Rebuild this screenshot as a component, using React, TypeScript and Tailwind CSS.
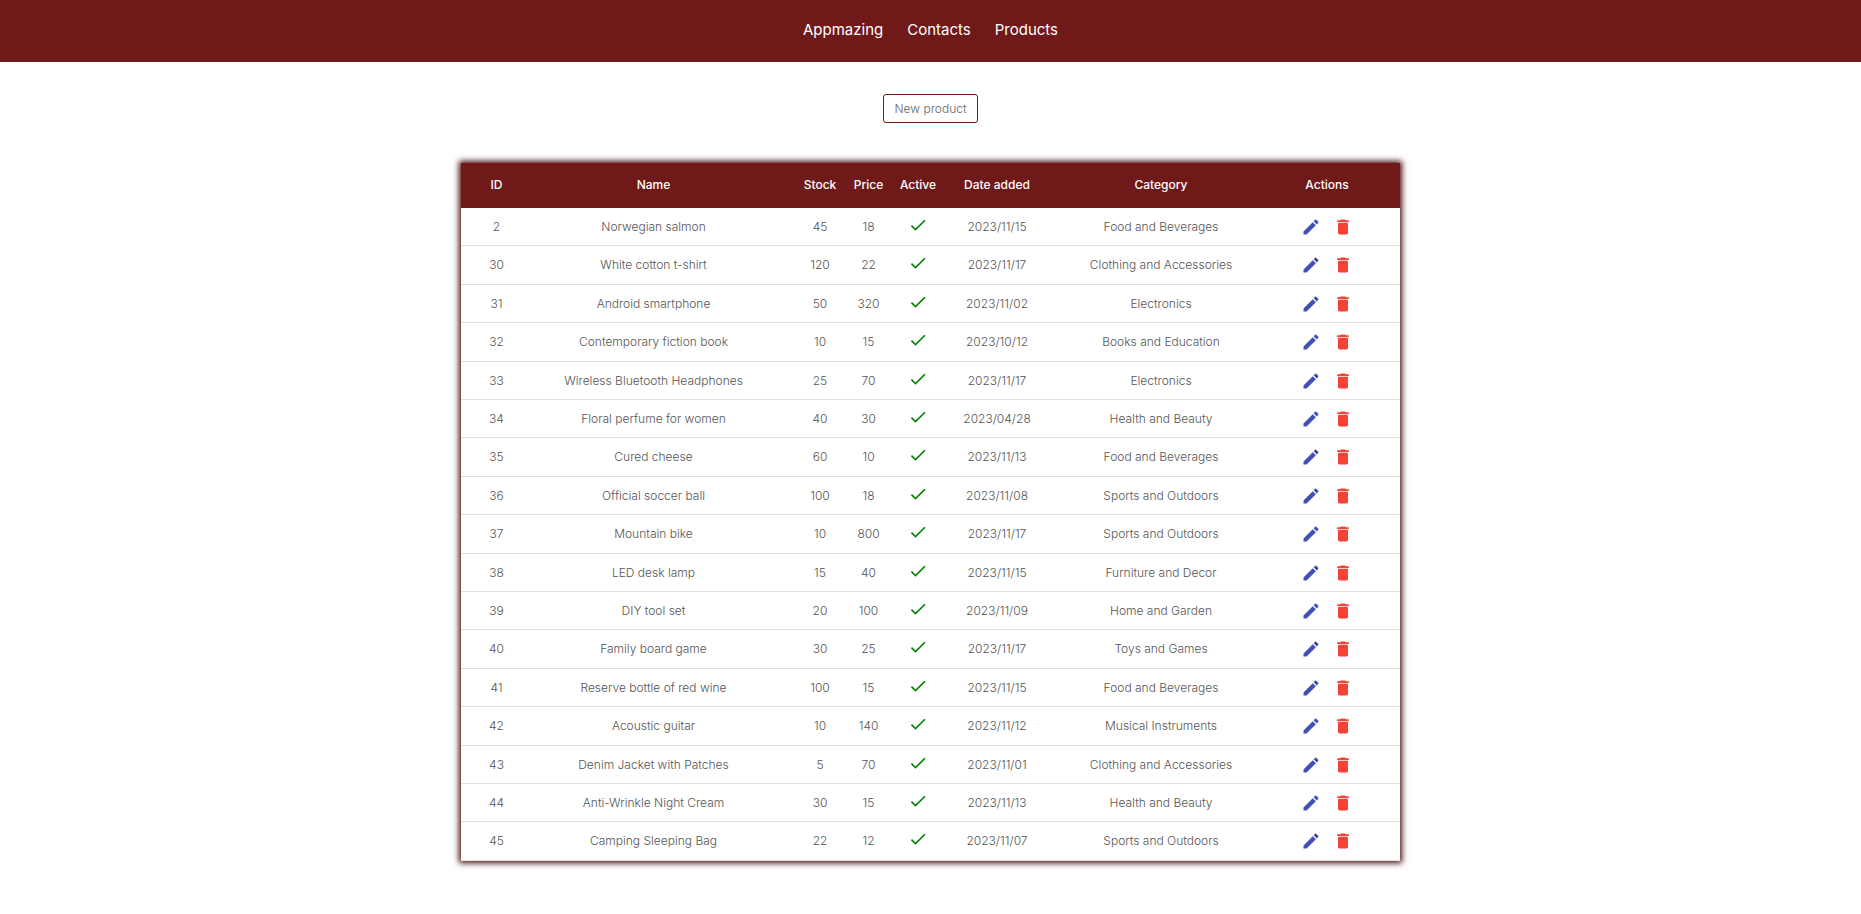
import { MdCheck, MdDelete, MdEdit } from "react-icons/md";

type Product = {
  id: number;
  name: string;
  stock: number;
  price: number;
  date: string;
  category: string;
};

const products: Product[] = [
  { id: 2, name: "Norwegian salmon", stock: 45, price: 18, date: "2023/11/15", category: "Food and Beverages" },
  { id: 30, name: "White cotton t-shirt", stock: 120, price: 22, date: "2023/11/17", category: "Clothing and Accessories" },
  { id: 31, name: "Android smartphone", stock: 50, price: 320, date: "2023/11/02", category: "Electronics" },
  { id: 32, name: "Contemporary fiction book", stock: 10, price: 15, date: "2023/10/12", category: "Books and Education" },
  { id: 33, name: "Wireless Bluetooth Headphones", stock: 25, price: 70, date: "2023/11/17", category: "Electronics" },
  { id: 34, name: "Floral perfume for women", stock: 40, price: 30, date: "2023/04/28", category: "Health and Beauty" },
  { id: 35, name: "Cured cheese", stock: 60, price: 10, date: "2023/11/13", category: "Food and Beverages" },
  { id: 36, name: "Official soccer ball", stock: 100, price: 18, date: "2023/11/08", category: "Sports and Outdoors" },
  { id: 37, name: "Mountain bike", stock: 10, price: 800, date: "2023/11/17", category: "Sports and Outdoors" },
  { id: 38, name: "LED desk lamp", stock: 15, price: 40, date: "2023/11/15", category: "Furniture and Decor" },
  { id: 39, name: "DIY tool set", stock: 20, price: 100, date: "2023/11/09", category: "Home and Garden" },
  { id: 40, name: "Family board game", stock: 30, price: 25, date: "2023/11/17", category: "Toys and Games" },
  { id: 41, name: "Reserve bottle of red wine", stock: 100, price: 15, date: "2023/11/15", category: "Food and Beverages" },
  { id: 42, name: "Acoustic guitar", stock: 10, price: 140, date: "2023/11/12", category: "Musical Instruments" },
  { id: 43, name: "Denim Jacket with Patches", stock: 5, price: 70, date: "2023/11/01", category: "Clothing and Accessories" },
  { id: 44, name: "Anti-Wrinkle Night Cream", stock: 30, price: 15, date: "2023/11/13", category: "Health and Beauty" },
  { id: 45, name: "Camping Sleeping Bag", stock: 22, price: 12, date: "2023/11/07", category: "Sports and Outdoors" },
];

function Navbar() {
  return (
    <header className="bg-[#701919]">
      <nav className="flex h-[62px] items-center justify-center gap-6 pb-0.5 text-[15px] text-white">
        <a href="#home">Appmazing</a>
        <a href="#contacts">Contacts</a>
        <a href="#products">Products</a>
      </nav>
    </header>
  );
}

function ProductRow({ product }: { product: Product }) {
  return (
    <tr className="h-[38px] nth-[5n+2]:h-[39px] nth-[5n+4]:h-[39px] [&>td]:border-b [&>td]:border-[#e0e0e0]">
      <td className="pl-5">{product.id}</td>
      <td>{product.name}</td>
      <td>{product.stock}</td>
      <td>{product.price}</td>
      <td>
        <MdCheck className="mx-auto mb-1 size-5 text-[#008000]" title="Active" />
      </td>
      <td>{product.date}</td>
      <td>{product.category}</td>
      <td className="pr-[18px]">
        <div className="flex justify-center gap-3">
          <button type="button" aria-label={`Edit ${product.name}`} className="text-[#3f51b5]">
            <MdEdit className="size-5" />
          </button>
          <button type="button" aria-label={`Delete ${product.name}`} className="text-[#f44336]">
            <MdDelete className="size-5" />
          </button>
        </div>
      </td>
    </tr>
  );
}

export default function App() {
  return (
    <div className="font-['Inter','Liberation_Sans',sans-serif]">
      <Navbar />
      <main className="flex flex-col items-center px-4 pt-8 pb-8">
        <button
          type="button"
          className="h-[29px] rounded-[3px] border border-[#701919] px-2.5 text-[12px] font-light text-[#666]"
        >
          New product
        </button>
        <table className="mt-10 w-full max-w-[939px] table-fixed border-separate border-spacing-0 bg-white text-center text-[12px] font-light text-[#555] shadow-[0_0_6px_2px_#4a0a0e]">
          <colgroup>
            <col className="w-[51px]" />
            <col />
            <col className="w-[50px]" />
            <col className="w-[47px]" />
            <col className="w-[52px]" />
            <col className="w-[106px]" />
            <col className="w-[222px]" />
            <col className="w-[128px]" />
          </colgroup>
          <thead className="bg-[#701919] text-white">
            <tr className="h-[45px] [&>th]:pb-0.5 [&>th]:font-medium">
              <th className="pl-5">ID</th>
              <th>Name</th>
              <th>Stock</th>
              <th>Price</th>
              <th>Active</th>
              <th>Date added</th>
              <th>Category</th>
              <th className="pr-[18px]">Actions</th>
            </tr>
          </thead>
          <tbody>
            {products.map((product) => (
              <ProductRow key={product.id} product={product} />
            ))}
          </tbody>
        </table>
      </main>
    </div>
  );
}
